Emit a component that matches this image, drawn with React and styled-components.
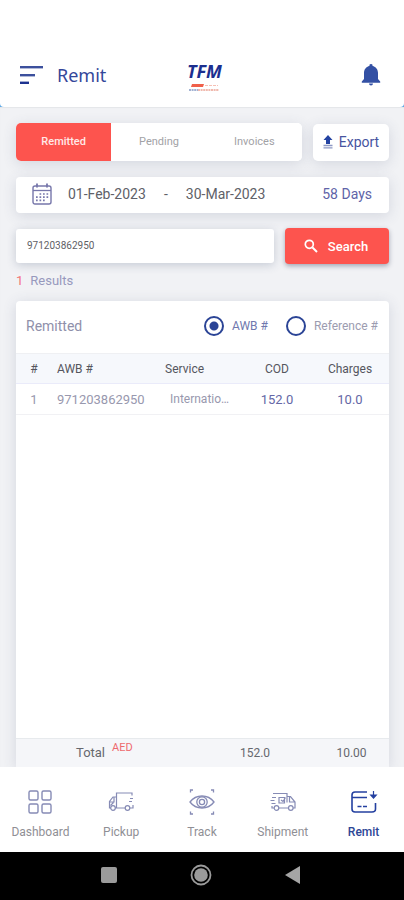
import React, { useState } from "react";
import styled, { createGlobalStyle } from "styled-components";

const GlobalStyle = createGlobalStyle`
  * {
    box-sizing: border-box;
  }

  body {
    margin: 0;
    background-color: #f1f2f5;
    font-family: Roboto, "Liberation Sans", sans-serif;
    color: #5c5e66;
  }

  button,
  input {
    font-family: inherit;
  }
`;

const Page = styled.div`
  min-height: 100vh;
  display: flex;
  flex-direction: column;
`;

const HeaderEdge = styled.div`
  background-color: #5fa9e6;
`;

const Header = styled.header`
  display: grid;
  grid-template-columns: 1fr auto 1fr;
  align-items: center;
  padding: 42px 23px 0 20px;
  height: 107px;
  background-color: white;
  border-radius: 0 0 4px 4px;
`;

const HeaderLeft = styled.div`
  display: flex;
  align-items: center;
  gap: 14px;
`;

const IconButton = styled.button`
  display: flex;
  justify-self: end;
  padding: 0;
  border: none;
  background: none;
  cursor: pointer;
`;

const Title = styled.h1`
  margin: 0;
  font-family: "Noto Sans", sans-serif;
  font-size: 18px;
  line-height: 24px;
  font-weight: 400;
  color: #34479a;
`;

const Main = styled.main`
  flex: 1;
  display: flex;
  flex-direction: column;
  padding: 16px 15px 0 16px;
  overflow: hidden;
  box-shadow: inset 0 1px 1px #e4e6e9;
`;

const Row = styled.div`
  display: flex;
  align-items: center;
  gap: 11px;
  margin-bottom: 16px;
`;

const Tabs = styled.div`
  flex: 1;
  display: flex;
  height: 38px;
  overflow: hidden;
  background-color: white;
  border-radius: 5px;
  box-shadow: 0 3px 14px rgba(60, 75, 110, 0.16);
`;

const Tab = styled.button`
  flex: 1;
  padding: 0 0 2px;
  border: none;
  font-size: 11px;
  font-weight: ${(p) => (p.$active ? 500 : 400)};
  color: ${(p) => (p.$active ? "#ffe9e7" : "#a2a2a6")};
  background-color: ${(p) => (p.$active ? "#fd544e" : "white")};
  cursor: pointer;
`;

const ExportButton = styled.button`
  width: 76px;
  height: 37px;
  display: flex;
  align-items: center;
  justify-content: center;
  gap: 6px;
  padding: 0;
  border: none;
  border-radius: 5px;
  font-size: 14px;
  color: #47549f;
  background-color: white;
  box-shadow: 0 3px 14px rgba(60, 75, 110, 0.16);
  cursor: pointer;
`;

const DateRange = styled.button`
  width: 100%;
  height: 36px;
  display: flex;
  align-items: center;
  margin-bottom: 15px;
  padding: 0 17px 2px 16px;
  border: none;
  border-radius: 4px;
  font-size: 14px;
  color: #606168;
  background-color: white;
  box-shadow: 0 3px 14px rgba(60, 75, 110, 0.16);
  cursor: pointer;

  svg {
    margin-right: 16px;
  }
`;

const Dash = styled.span`
  width: 40px;
  text-align: center;
`;

const Days = styled.span`
  margin-left: auto;
  color: #6063a8;
`;

const SearchForm = styled.form`
  display: flex;
  align-items: center;
  gap: 11px;
  margin-bottom: 8px;
`;

const SearchInput = styled.input`
  flex: 1;
  min-width: 0;
  height: 34px;
  padding: 0 11px 2px;
  border: none;
  border-radius: 3px;
  font-size: 10px;
  color: #5f5f66;
  background-color: white;
  box-shadow: 0 2px 10px rgba(60, 75, 110, 0.24);
`;

const SearchButton = styled.button`
  width: 104px;
  height: 36px;
  display: flex;
  align-items: center;
  justify-content: center;
  gap: 10px;
  padding: 0 2px 0 0;
  border: none;
  border-radius: 4px;
  font-size: 13px;
  font-weight: 500;
  color: white;
  background-color: #fd544e;
  box-shadow: 0 2px 5px rgba(40, 50, 80, 0.4);
  cursor: pointer;
`;

const Results = styled.p`
  margin: 0 0 12px;
  font-size: 13px;
  line-height: 17px;
  color: #9799bd;

  b {
    margin-right: 7px;
    font-weight: 400;
    color: #f4747a;
  }
`;

const Card = styled.section`
  flex: 1;
  display: flex;
  flex-direction: column;
  background-color: white;
  border-radius: 4px 4px 0 0;
  box-shadow: 0 2px 14px rgba(60, 75, 110, 0.16);
`;

const CardHead = styled.div`
  display: flex;
  align-items: center;
  height: 52px;
  padding: 0 11px 2px 10px;
`;

const CardTitle = styled.h2`
  margin: 0 auto 0 0;
  font-size: 14px;
  font-weight: 400;
  color: #8f90aa;
`;

const RadioLabel = styled.label`
  display: flex;
  align-items: center;
  gap: 8px;
  margin-left: 18px;
  font-size: 12px;
  color: ${(p) => (p.$active ? "#7078ae" : "#9c9cb0")};
  cursor: pointer;
`;

const Radio = styled.input`
  appearance: none;
  width: 20px;
  height: 20px;
  margin: 0;
  border: 2px solid #2b4496;
  border-radius: 50%;
  background-color: white;
  cursor: pointer;

  &:checked {
    background-image: radial-gradient(circle, #2b4496 4px, transparent 5px);
  }
`;

const Table = styled.table`
  flex: 1;
  display: flex;
  flex-direction: column;

  tbody {
    flex: 1;
  }

  th,
  td {
    padding: 0;
    font-weight: 400;
    text-align: center;
    white-space: nowrap;
  }
`;

const TableRow = styled.tr`
  display: grid;
  grid-template-columns: 36fr 113fr 78fr 68fr 78fr;
  align-items: center;
  height: 31px;
  font-size: ${(p) => (p.$head ? "12px" : "13px")};
  color: ${(p) => (p.$head ? "#55565e" : "#9898ae")};
  background-color: ${(p) => (p.$head ? "#f6f8fc" : "white")};
  border-top: ${(p) => (p.$head ? "1px solid #eff0f3" : "none")};
  border-bottom: 1px solid ${(p) => (p.$head ? "#eaebfa" : "#f1f1f4")};

  th:nth-child(2),
  th:nth-child(3),
  td:nth-child(2) {
    text-align: left;
  }

  th:nth-child(2),
  td:nth-child(2) {
    padding-left: 5px;
  }

  td:nth-child(3) {
    padding: 0 9px 0 5px;
    font-size: 12px;
    text-align: left;
    overflow: hidden;
    text-overflow: ellipsis;
  }

  td:nth-child(n + 4) {
    color: #6467a6;
  }
`;

const TotalRow = styled.tr`
  display: grid;
  grid-template-columns: 200fr 78fr 95fr;
  align-items: center;
  height: 29px;
  font-size: 12px;
  color: #66686e;
  background-color: #f5f6f9;
  border-top: 1px solid #e7eaed;

  td:last-child {
    padding-left: 20px;
  }
`;

const TotalLabel = styled.th`
  && {
    display: flex;
    align-items: flex-start;
    gap: 7px;
    height: 24px;
    padding-left: 60px;
    font-size: 13px;
    line-height: 24px;
  }

  sup {
    font-size: 11px;
    line-height: 13px;
    color: #ee6a6e;
  }
`;

const Nav = styled.nav`
  display: flex;
  height: 85px;
  background-color: white;
`;

const NavLink = styled.a`
  flex: 1;
  display: flex;
  flex-direction: column;
  align-items: center;
  gap: 8px;
  padding-top: 21px;
  font-size: 12px;
  line-height: 16px;
  font-weight: ${(p) => (p.$active ? 500 : 400)};
  color: ${(p) => (p.$active ? "#2d4696" : "#8f8f95")};
  text-decoration: none;

  svg {
    color: ${(p) => (p.$active ? "#2440a0" : "#868bb5")};
  }
`;

const SystemBar = styled.div`
  display: flex;
  align-items: center;
  justify-content: center;
  gap: 70px;
  height: 48px;
  padding: 0 2px 2px 0;
  background-color: black;
`;

const LogoBox = styled.div`
  display: flex;
  flex-direction: column;
  align-items: center;
  padding-left: 8px;
`;

const LogoText = styled.span`
  font-family: "Open Sans", sans-serif;
  font-size: 18px;
  line-height: 26px;
  font-weight: 700;
  font-style: italic;
  color: #1c2f8f;
`;

const MenuIcon = () => (
  <svg width="23" height="20" viewBox="0 0 23 20" fill="#3c509d">
    <rect y="1" width="23" height="2.4" />
    <rect y="9" width="15" height="2.4" />
    <rect y="16.6" width="9" height="2.4" fill="#1d3290" />
  </svg>
);

const Logo = () => (
  <LogoBox>
    <LogoText>TFM</LogoText>
    <svg width="32" height="8" viewBox="0 0 32 8">
      <path d="M4 0h12l-1 3H3z" fill="#f0604a" />
      <path d="M17 1.500h13" stroke="#f6c0b5" strokeDasharray="3 1" />
      <path d="M1 6h9" stroke="#8298c4" strokeWidth="1.400" strokeDasharray="2 0.600" />
      <path d="M10 6h21" stroke="#eba394" strokeWidth="1.400" strokeDasharray="2 0.600" />
    </svg>
  </LogoBox>
);

const BellIcon = () => (
  <svg width="20" height="24" viewBox="0 0 20 24" fill="#3350a4">
    <path d="M10 1a1.600 1.600 0 0 0-1.600 1.900C5.200 3.600 3 6.300 3 9.800V16L.8 18.400V19.800h18.400v-1.400L17 16V9.800c0-3.500-2.200-6.200-5.400-6.900A1.600 1.600 0 0 0 10 1z" />
    <path d="M8 20.500h4a2 2 0 0 1-4 0z" />
  </svg>
);

const ExportIcon = () => (
  <svg width="10" height="14" viewBox="0 0 10 14">
    <path d="M5 0L.5 5H3v4h4V5h2.500z" fill="#2443a2" />
    <path d="M.5 10.500h9M.5 12.800h9" stroke="#8d98c4" strokeWidth="1.300" />
  </svg>
);

const CalendarIcon = () => (
  <svg width="20" height="22" viewBox="0 0 20 22" fill="none" stroke="#7777ab">
    <rect x="1" y="3" width="18" height="18" rx="2" strokeWidth="1.400" />
    <path d="M1 7.500h18" strokeWidth="1.300" />
    <path d="M5 .5v4M15 .5v4" strokeWidth="1.800" />
    <path
      d="M7.500 11h9M4 14.200h12.500M4 17.400h9"
      strokeWidth="1.700"
      strokeDasharray="1.700 1.800"
    />
  </svg>
);

const SearchIcon = () => (
  <svg width="14" height="14" viewBox="0 0 14 14" fill="none" stroke="white">
    <circle cx="5.300" cy="5.300" r="4" strokeWidth="1.700" />
    <path d="M8.500 8.500L13 13" strokeWidth="2" />
  </svg>
);

const DashboardIcon = () => (
  <svg width="28" height="28" viewBox="0 0 28 28" fill="none" stroke="currentColor" strokeWidth="1.400">
    <rect x="3" y="3" width="9" height="9" rx="1.500" />
    <rect x="16" y="3" width="9" height="9" rx="1.500" />
    <rect x="3" y="16" width="9" height="9" rx="1.500" />
    <rect x="16" y="16" width="9" height="9" rx="1.500" />
  </svg>
);

const PickupIcon = () => (
  <svg width="28" height="28" viewBox="0 0 28 28" fill="none" stroke="currentColor" strokeWidth="1.200">
    <path d="M9.500 20V5H25V7.500" />
    <path d="M9.500 9H6L2.500 13.500V20H4M8 20h10.500M22.500 20H26v-3M7 9.500v4.500H2.500M3.500 17.500l3-3M23 10.500h3M22 13.500h3" />
    <circle cx="6" cy="20" r="2.300" />
    <circle cx="20.500" cy="20" r="2.300" />
  </svg>
);

const TrackIcon = () => (
  <svg width="28" height="28" viewBox="0 0 28 28" fill="none" stroke="currentColor" strokeWidth="1.300">
    <path d="M2.500 4.500V2h2.500M23 2h2.500v2.500M25.500 23.500v2.500h-2.500M5 26H2.500v-2.500" />
    <path d="M2 14c6-8 18-8 24 0c-6 8-18 8-24 0z" />
    <circle cx="14" cy="14" r="5.200" />
    <circle cx="14" cy="14" r="2.600" />
  </svg>
);

const ShipmentIcon = () => (
  <svg width="28" height="28" viewBox="0 0 28 28" fill="none" stroke="currentColor" strokeWidth="1.200">
    <path d="M4 5.500h14V8.500h3.500l4.500 5.500v6h-2M9.500 20H19.500M5 20H3v-2M20.500 9v5H26M18 8.500v6" />
    <path d="M3 9.500h4M1.500 12.500h4M2.500 15.500h4M10 9.500h5.500v5.500H10zM12 12l2 1.500 2.500-4" />
    <circle cx="7.500" cy="20" r="2.300" />
    <circle cx="21.800" cy="20" r="2.300" />
  </svg>
);

const RemitIcon = () => (
  <svg width="28" height="28" viewBox="0 0 28 28" fill="none" stroke="currentColor" strokeWidth="1.600">
    <path d="M17 4H5Q2 4 2 7V21Q2 24 5 24H22Q25.500 24 25.500 21V15M2 9.500h15" />
    <path d="M7.500 18.500h4M13 18.500h4" strokeWidth="1.300" />
    <path d="M23.500 3v5M20.800 7l2.700 3 2.700-3z" fill="currentColor" strokeWidth="1.200" />
  </svg>
);

const tabs = ["Remitted", "Pending", "Invoices"];

const rows = [
  { awb: "971203862950", service: "International", cod: "152.0", charges: "10.0" },
];

const links = [
  { name: "Dashboard", Icon: DashboardIcon },
  { name: "Pickup", Icon: PickupIcon },
  { name: "Track", Icon: TrackIcon },
  { name: "Shipment", Icon: ShipmentIcon },
  { name: "Remit", Icon: RemitIcon },
];

const App = () => {
  const [tab, setTab] = useState("Remitted");
  const [field, setField] = useState("AWB #");
  const [query, setQuery] = useState("971203862950");

  return (
    <Page>
      <GlobalStyle />
      <HeaderEdge>
        <Header>
          <HeaderLeft>
            <IconButton aria-label="Menu">
              <MenuIcon />
            </IconButton>
            <Title>Remit</Title>
          </HeaderLeft>
          <Logo />
          <IconButton aria-label="Notifications">
            <BellIcon />
          </IconButton>
        </Header>
      </HeaderEdge>
      <Main>
        <Row>
          <Tabs>
            {tabs.map((name) => (
              <Tab key={name} $active={name === tab} onClick={() => setTab(name)}>
                {name}
              </Tab>
            ))}
          </Tabs>
          <ExportButton>
            <ExportIcon />
            Export
          </ExportButton>
        </Row>
        <DateRange>
          <CalendarIcon />
          <span>01-Feb-2023</span>
          <Dash>-</Dash>
          <span>30-Mar-2023</span>
          <Days>58 Days</Days>
        </DateRange>
        <SearchForm onSubmit={(e) => e.preventDefault()}>
          <SearchInput
            aria-label="Search number"
            value={query}
            onChange={(e) => setQuery(e.target.value)}
          />
          <SearchButton type="submit">
            <SearchIcon />
            Search
          </SearchButton>
        </SearchForm>
        <Results>
          <b>1</b>Results
        </Results>
        <Card>
          <CardHead>
            <CardTitle>Remitted</CardTitle>
            {["AWB #", "Reference #"].map((name) => (
              <RadioLabel key={name} $active={name === field}>
                <Radio
                  type="radio"
                  name="field"
                  checked={name === field}
                  onChange={() => setField(name)}
                />
                {name}
              </RadioLabel>
            ))}
          </CardHead>
          <Table>
            <thead>
              <TableRow $head>
                <th>#</th>
                <th>AWB #</th>
                <th>Service</th>
                <th>COD</th>
                <th>Charges</th>
              </TableRow>
            </thead>
            <tbody>
              {rows.map((row, i) => (
                <TableRow key={row.awb}>
                  <td>{i + 1}</td>
                  <td>{row.awb}</td>
                  <td>{row.service}</td>
                  <td>{row.cod}</td>
                  <td>{row.charges}</td>
                </TableRow>
              ))}
            </tbody>
            <tfoot>
              <TotalRow>
                <TotalLabel colSpan={3}>
                  Total <sup>AED</sup>
                </TotalLabel>
                <td>152.0</td>
                <td>10.00</td>
              </TotalRow>
            </tfoot>
          </Table>
        </Card>
      </Main>
      <Nav>
        {links.map(({ name, Icon }) => (
          <NavLink key={name} href="#" $active={name === "Remit"}>
            <Icon />
            {name}
          </NavLink>
        ))}
      </Nav>
      <SystemBar>
        <svg width="22" height="22" viewBox="0 0 22 22" fill="#9b9b9b">
          <rect x="3" y="3" width="16" height="16" rx="2" />
        </svg>
        <svg width="22" height="22" viewBox="0 0 22 22" fill="#9b9b9b">
          <circle cx="11" cy="11" r="9.500" fill="none" stroke="#9b9b9b" strokeWidth="1.800" />
          <circle cx="11" cy="11" r="6.800" />
        </svg>
        <svg width="22" height="22" viewBox="0 0 22 22" fill="#a5a5a5">
          <path d="M18 2v18L3 11z" />
        </svg>
      </SystemBar>
    </Page>
  );
};

export default App;
